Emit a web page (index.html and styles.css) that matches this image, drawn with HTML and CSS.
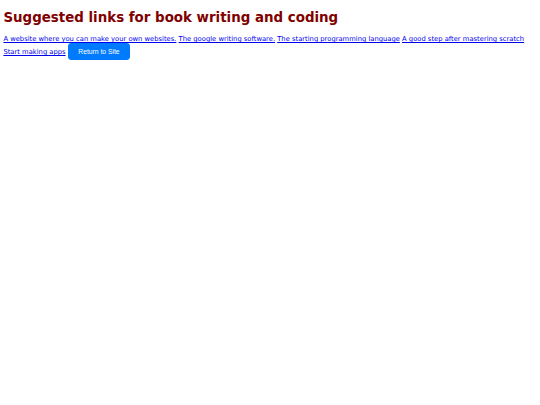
FILE: index.html
```html
<!DOCTYPE html>
<html>
<head>
<meta charset="utf-8">
<link rel="stylesheet" href="styles.css">
</head>
<body>
<h1 class="title">Suggested links for book writing and coding</h1>
<div class="links">
<a href="#">A website where you can make your own websites.</a>
<a href="#">The google writing software.</a>
<a href="#">The starting programming language</a>
<a href="#">A good step after mastering scratch</a>
<a href="#">Start making apps</a>
<button class="btn">Return to Site</button>
</div>
</body>
</html>
```
FILE: styles.css
```css
body {
  margin: 3.4px;
  font-family: "DejaVu Sans", Verdana, sans-serif;
  font-size: 6.78px;
  background: #fff;
}
.title {
  color: #800000;
  font-size: 13.4px;
  font-weight: bold;
  margin: 7px 0 10px;
}
.links a {
  color: #0000ee;
}
.btn {
  font-family: "Liberation Sans", Arial, sans-serif;
  font-size: 6.78px;
  color: #fff;
  background: #007bff;
  border: none;
  border-radius: 3.4px;
  padding: 4.6px 10.5px;
}
```
